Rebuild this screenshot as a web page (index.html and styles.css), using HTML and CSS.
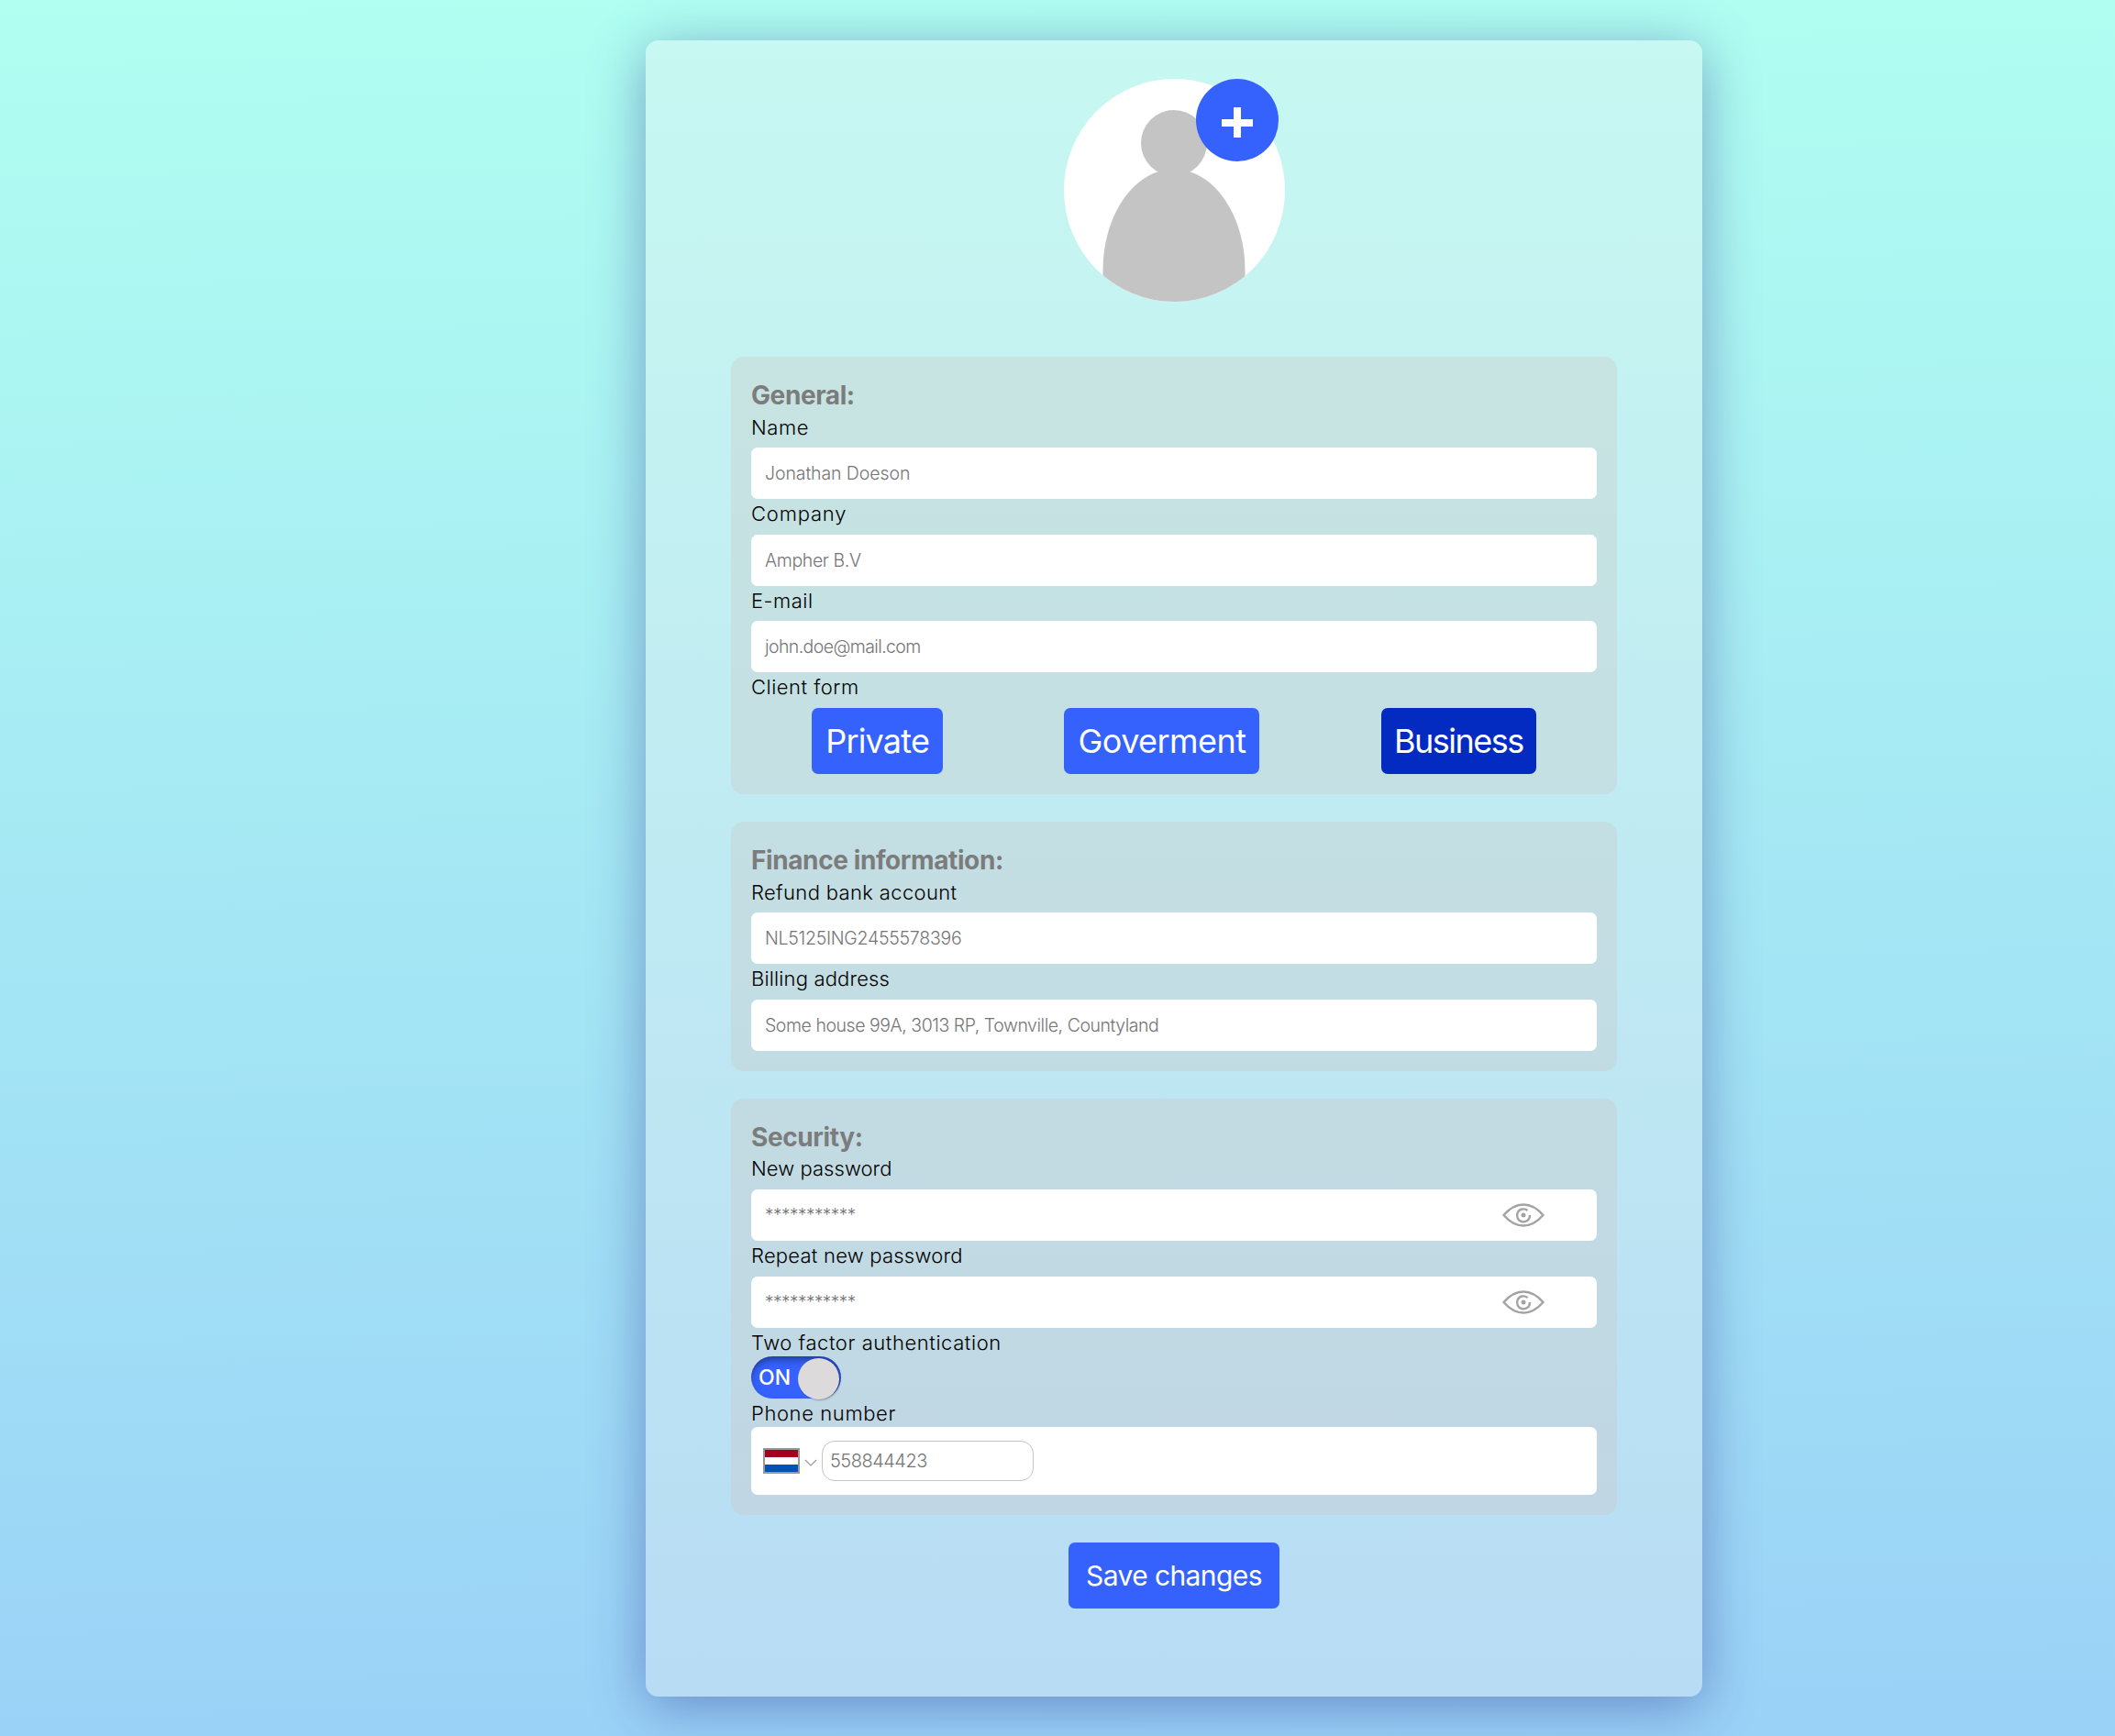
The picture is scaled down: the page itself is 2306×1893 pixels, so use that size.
FILE: index.html
```html
<!DOCTYPE html>
<html lang="en">
<head>
<meta charset="utf-8">
<title>Account settings</title>
<link rel="stylesheet" href="styles.css">
</head>
<body>
<main class="card">
  <div class="avatar">
    <svg class="avatar-img" viewBox="0 0 241 243">
      <defs><clipPath id="round"><ellipse cx="120.5" cy="121.5" rx="120.5" ry="121.5"/></clipPath></defs>
      <g clip-path="url(#round)">
        <rect width="241" height="243" fill="#fff"/>
        <circle cx="120" cy="70" r="36"/>
        <path d="M42.500 243V209C42.500 148 77 98.500 120 98.500S197.500 148 197.500 209V243Z"/>
      </g>
    </svg>
    <div class="avatar-add">
      <svg viewBox="0 0 34 34"><path d="M13 0h8v13h13v8H21v12h-8V21H0v-8h13z"/></svg>
    </div>
  </div>

  <section class="panel">
    <h2><span class="h-general">General:</span></h2>
    <label class="l-name">Name</label>
    <div class="field"><span class="f-name">Jonathan Doeson</span></div>
    <label class="l-company">Company</label>
    <div class="field"><span class="f-company">Ampher B.V</span></div>
    <label class="l-mail">E-mail</label>
    <div class="field"><span class="f-mail">john.doe@mail.com</span></div>
    <label class="l-form">Client form</label>
    <div class="choices">
      <div class="btn private">Private</div>
      <div class="btn goverment">Goverment</div>
      <div class="btn business">Business</div>
    </div>
  </section>

  <section class="panel">
    <h2><span class="h-finance">Finance information:</span></h2>
    <label class="l-refund">Refund bank account</label>
    <div class="field"><span class="f-refund">NL5125ING2455578396</span></div>
    <label class="l-billing">Billing address</label>
    <div class="field"><span class="f-billing">Some house 99A, 3013 RP, Townville, Countyland</span></div>
  </section>

  <section class="panel">
    <h2><span class="h-security">Security:</span></h2>
    <label class="l-new">New password</label>
    <div class="field"><span class="stars">***********</span>
      <svg class="eye" viewBox="0 0 46 26"><path d="M1.500 13C8 5.500 16 1.500 23 1.500S38 5.500 44.500 13C38 20.500 30 24.500 23 24.500S8 20.500 1.500 13Z"/><path d="M30 13a7 7 0 1 1-2.500-5"/><circle cx="23" cy="13" r="2.500"/></svg>
    </div>
    <label class="l-repeat">Repeat new password</label>
    <div class="field"><span class="stars">***********</span>
      <svg class="eye" viewBox="0 0 46 26"><path d="M1.500 13C8 5.500 16 1.500 23 1.500S38 5.500 44.500 13C38 20.500 30 24.500 23 24.500S8 20.500 1.500 13Z"/><path d="M30 13a7 7 0 1 1-2.500-5"/><circle cx="23" cy="13" r="2.500"/></svg>
    </div>
    <label class="l-two">Two factor authentication</label>
    <div class="toggle"><span>ON</span><i class="knob"></i></div>
    <label class="l-phone">Phone number</label>
    <div class="phone">
      <div class="flag"></div>
      <svg class="chevron" viewBox="0 0 14 8"><path d="M1 1l6 6 6-6"/></svg>
      <div class="phone-input"><span class="f-phone">558844423</span></div>
    </div>
  </section>

  <div class="btn save">Save changes</div>
</main>
</body>
</html>
```
FILE: styles.css
```css
* { box-sizing: border-box; }
body {
  margin: 0;
  height: 1893px;
  padding: 44px 0 0 704px;
  overflow: hidden;
  background: linear-gradient(179deg, #b0fff1, #9ad1f7);
  font-family: Inter, "Liberation Sans", sans-serif;
  font-weight: 300;
  color: #000;
}
.card {
  width: 1152px;
  height: 1806px;
  padding: 42px 93px 0;
  display: flex;
  flex-direction: column;
  align-items: center;
  border-radius: 14px;
  background: linear-gradient(180deg, #c7f8f1, #b8dcf4);
  box-shadow: 0 10px 60px rgba(31, 38, 135, .42);
}
.avatar { position: relative; width: 241px; height: 243px; margin-bottom: 60px; }
.avatar-img { display: block; width: 241px; height: 243px; fill: #c4c4c4; }
.avatar-add {
  position: absolute;
  left: 144px;
  top: 0;
  width: 90px;
  height: 90px;
  padding: 31px 28px;
  border-radius: 50%;
  background: #3562fd;
}
.avatar-add svg { display: block; width: 34px; height: 34px; fill: #fff; }

.panel {
  width: 966px;
  padding: 22px;
  margin-bottom: 30px;
  border-radius: 14px;
  background: rgba(206, 197, 192, .3);
}
h2 {
  margin: 0;
  height: 38.5px;
  font-size: 28px;
  line-height: 41px;
  font-weight: 700;
  letter-spacing: -.4px;
  color: #7c7c7c;
  white-space: nowrap;
}
label { display: block; height: 30.65px; font-size: 22px; line-height: 32px; white-space: nowrap; }
.field {
  height: 56px;
  margin-top: 8px;
  padding: 0 57px 0 15px;
  display: flex;
  align-items: center;
  justify-content: space-between;
  border-radius: 7px;
  background: #fff;
  color: #757575;
  font-size: 19.5px;
  white-space: nowrap;
}
.choices { display: flex; justify-content: space-around; margin-top: 8px; }
.btn {
  height: 72px;
  border-radius: 7px;
  background: #3562fd;
  color: #fff;
  font-size: 36px;
  font-weight: 400;
  line-height: 72px;
  text-align: center;
  white-space: nowrap;
}
.private { width: 143px; letter-spacing: -.8px; }
.goverment { width: 213px; letter-spacing: -.57px; }
.business { width: 169px; letter-spacing: -1.5px; background: #042bc1; }
.save { width: 230px; font-size: 30px; letter-spacing: -.6px; }

.eye { width: 46px; height: 26px; fill: none; stroke: #a3a3a3; stroke-width: 2.4; }
.eye circle { fill: #a3a3a3; stroke: none; }
.toggle {
  width: 98px;
  height: 46px;
  margin-top: .8px;
  padding: 2px 2px 0 8px;
  display: flex;
  justify-content: space-between;
  border-radius: 23px;
  background: #3562fd;
  box-shadow: inset 0 5px 8px -2px rgba(0, 0, 0, .45);
  color: #fff;
  font-size: 23px;
  font-weight: 500;
  line-height: 43px;
}
.knob { width: 45px; height: 45px; border-radius: 50%; background: #dcdadb; box-shadow: 1px 1px 2px rgba(0, 0, 0, .3); }
.phone {
  height: 74px;
  padding: 0 13px;
  display: flex;
  align-items: center;
  border-radius: 7px;
  background: #fff;
}
.flag {
  width: 40px;
  height: 28px;
  border: 2px solid #999;
  background: linear-gradient(#a2001d 0 33%, #fff 33% 67%, #0052b4 67%);
}
.chevron { width: 14px; height: 8px; margin: 4px 5px 0; fill: none; stroke: #999; stroke-width: 1.2; }
.phone-input {
  width: 231px;
  height: 44px;
  padding-left: 8px;
  border: 1px solid #c4c4c4;
  border-radius: 14px;
  color: #757575;
  font-size: 20px;
  line-height: 43px;
}
.stars { font-size: 19px; letter-spacing: -.53px; }

/* Optical tracking */
.l-name { letter-spacing: .6px; }
.l-company { letter-spacing: .8px; }
.l-mail, .l-form { letter-spacing: .5px; }
.l-refund { letter-spacing: .35px; }
.l-billing { letter-spacing: .15px; }
.l-new { letter-spacing: .06px; }
.l-repeat { letter-spacing: .22px; }
.l-two { letter-spacing: .56px; }
.l-phone { letter-spacing: .6px; }
.f-name { letter-spacing: -.1px; }
.f-company { letter-spacing: -.37px; }
.f-mail { letter-spacing: -.6px; }
.f-refund { letter-spacing: -.27px; }
.f-billing { letter-spacing: -.46px; }
.f-phone { letter-spacing: -.5px; }
```
